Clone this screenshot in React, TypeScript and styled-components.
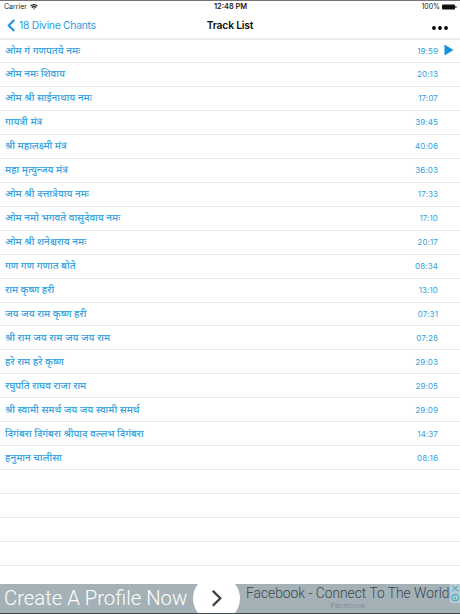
import React from "react";
import styled, { createGlobalStyle } from "styled-components";

const Global = createGlobalStyle`
  * { box-sizing: border-box; }
  html, body { margin: 0; padding: 0; background: #fff; }
  body { font-family: Inter, "Liberation Sans", sans-serif; overflow: hidden; }
`;

const Screen = styled.div`
  width: 460px;
  height: 614px;
  display: flex;
  flex-direction: column;
  background: #fff;
  border-top: 1px solid #777577;
  overflow: hidden;
`;

const StatusBar = styled.div`
  height: 12px;
  flex: none;
  display: grid;
  grid-template-columns: 1fr auto 1fr;
  align-items: center;
  padding: 0 3px 0 4px;
  font-size: 7px;
  line-height: 12px;
  color: #222;
  white-space: nowrap;
`;

const StatusSide = styled.div<{ $end?: boolean }>`
  display: flex;
  align-items: center;
  justify-content: ${(p) => (p.$end ? "flex-end" : "flex-start")};
  gap: ${(p) => (p.$end ? 2 : 3)}px;
`;

const Clock = styled.div`
  font-weight: 600;
  font-size: 7.4px;
`;

const NavBar = styled.div`
  height: 27px;
  flex: none;
  display: grid;
  grid-template-columns: 1fr auto 1fr;
  align-items: center;
  padding: 0 12px 0 7px;
  border-bottom: 2px solid #ececee;
`;

const Back = styled.div`
  display: flex;
  align-items: center;
  gap: 4px;
  color: #2c9de4;
  font-size: 10.4px;
  letter-spacing: -0.3px;
  line-height: 14px;
  white-space: nowrap;
`;

const Title = styled.div`
  font-size: 10.4px;
  letter-spacing: -0.22px;
  line-height: 14px;
  font-weight: 600;
  color: #111;
  padding-left: 5px;
`;

const More = styled.div`
  display: flex;
  justify-content: flex-end;
  padding-top: 4px;
`;

const List = styled.div`
  flex: 1;
  min-height: 0;
  overflow: hidden;
`;

const Row = styled.div`
  height: 23.96px;
  display: flex;
  align-items: center;
  padding: 0 6px 0 5px;
  border-bottom: 1px solid #ebebed;
  color: #2f9fe0;

  &:first-child {
    height: 23px;
  }
`;

const Name = styled.div`
  flex: 1;
  font-family: "Noto Sans Devanagari", "Noto Sans", sans-serif;
  font-size: 10px;
  font-weight: 500;
  line-height: 20px;
  padding-top: 2px;
  white-space: nowrap;
`;

const Time = styled.div`
  font-size: 8px;
  line-height: 22px;
  letter-spacing: 0.1px;
`;

const Marker = styled.div`
  width: 16px;
  display: flex;
  justify-content: flex-end;
  padding-bottom: 2px;
`;

const Banner = styled.div`
  height: 30px;
  flex: none;
  display: flex;
  position: relative;
  overflow: hidden;
  background: #a4b1b7;
  border-bottom: 1px solid #3f474b;
  font-family: Roboto, sans-serif;
  font-weight: 300;
  white-space: nowrap;
`;

const Action = styled.div`
  width: 193px;
  padding-left: 4px;
  color: #fff;
  font-size: 20.3px;
  line-height: 29px;
`;

const Disc = styled.div`
  width: 47px;
  height: 47px;
  flex: none;
  margin-top: -9px;
  border-radius: 50%;
  background: #fff;
  display: flex;
  align-items: center;
  justify-content: center;
`;

const Promo = styled.div`
  flex: 1;
  padding-left: 6px;
  color: #3b484f;
`;

const PromoTitle = styled.div`
  font-size: 13.8px;
  line-height: 19px;
`;

const PromoBrand = styled.div`
  width: 204px;
  text-align: center;
  font-size: 8px;
  letter-spacing: 0.1px;
  line-height: 6px;
  color: #75838a;
`;

const AdChoices = styled.div`
  position: absolute;
  right: 0;
  top: 0;
  width: 10px;
  height: 19px;
  background: #bccbd2;
`;

const tracks: [string, string][] = [
  ["ओम गं गणपतये नमः", "19:59"],
  ["ओम नमः शिवाय", "20:13"],
  ["ओम श्री साईनाथाय नमः", "17:07"],
  ["गायत्री मंत्र", "39:45"],
  ["श्री महालक्ष्मी मंत्र", "40:06"],
  ["महा मृत्युन्जय मंत्र", "36:03"],
  ["ओम श्री दत्तात्रेयाय नमः", "17:33"],
  ["ओम नमो भगवते वासुदेवाय नमः", "17:10"],
  ["ओम श्री शनेश्चराय नमः", "20:17"],
  ["गण गण गणात बोते", "08:34"],
  ["राम कृष्ण हरी", "13:10"],
  ["जय जय राम कृष्ण हरी", "07:31"],
  ["श्री राम जय राम जय जय राम", "07:28"],
  ["हरे राम हरे कृष्ण", "29:03"],
  ["रघुपति राघव राजा राम", "29:05"],
  ["श्री स्वामी समर्थ जय जय स्वामी समर्थ", "29:09"],
  ["दिगंबरा दिगंबरा श्रीपाद वल्लभ दिगंबरा", "14:37"],
  ["हनुमान चालीसा", "08:16"],
];

const emptyRows = [0, 1, 2, 3];

export default function App() {
  return (
    <>
      <Global />
      <Screen>
        <StatusBar>
          <StatusSide>
            <span>Carrier</span>
            <svg width="8" height="6" viewBox="0 0 8 6" fill="none" stroke="#222" strokeWidth="1.2">
              <path d="M0.5 2.1C2.4 0.2 5.6 0.2 7.5 2.1" />
              <path d="M1.8 3.6C3 2.4 5 2.4 6.2 3.6" />
              <path d="M3 4.6L4 5.8L5 4.6Z" fill="#222" stroke="none" />
            </svg>
          </StatusSide>
          <Clock>12:48 PM</Clock>
          <StatusSide $end>
            <span>100%</span>
            <svg width="15" height="6" viewBox="0 0 15 6">
              <rect x="0" y="0.5" width="13" height="5" rx="1" fill="#111" />
              <rect x="13.4" y="2" width="1" height="2" fill="#111" />
            </svg>
          </StatusSide>
        </StatusBar>
        <NavBar>
          <Back>
            <svg width="8" height="13" viewBox="0 0 8 13" fill="none" stroke="#1c95e4" strokeWidth="2.1">
              <path d="M7.2 0.9L1.7 6.5L7.2 12.1" />
            </svg>
            <span>18 Divine Chants</span>
          </Back>
          <Title>Track List</Title>
          <More>
            <svg width="16" height="4" viewBox="0 0 16 4" fill="#000">
              <circle cx="2" cy="2" r="1.9" />
              <circle cx="8" cy="2" r="1.9" />
              <circle cx="14" cy="2" r="1.9" />
            </svg>
          </More>
        </NavBar>
        <List>
          {tracks.map(([name, time], i) => (
            <Row key={name}>
              <Name lang="hi">{name}</Name>
              <Time>{time}</Time>
              <Marker>
                {i === 0 && (
                  <svg width="10" height="12" viewBox="0 0 10 12">
                    <path d="M0.5 0.5L9.5 6L0.5 11.5Z" fill="#1593e2" />
                  </svg>
                )}
              </Marker>
            </Row>
          ))}
          {emptyRows.map((n) => (
            <Row key={n} />
          ))}
        </List>
        <Banner>
          <Action>Create A Profile Now</Action>
          <Disc>
            <svg width="10" height="18" viewBox="0 0 10 18" fill="none" stroke="#3b4246" strokeWidth="2.3">
              <path d="M0.8 0.8L8.3 8.3L0.8 15.8" />
            </svg>
          </Disc>
          <Promo>
            <PromoTitle>Facebook - Connect To The World</PromoTitle>
            <PromoBrand>Facebook</PromoBrand>
          </Promo>
          <AdChoices>
            <svg width="10" height="19" viewBox="0 0 10 19" fill="none" stroke="#29a3c4" strokeWidth="1">
              <path d="M2 1.5L8.4 7.3M8.4 1.5L2 7.3" />
              <circle cx="5.2" cy="13.6" r="3.4" />
              <path d="M5.2 13V15.6M5.2 11.4V12.2" />
            </svg>
          </AdChoices>
        </Banner>
      </Screen>
    </>
  );
}
